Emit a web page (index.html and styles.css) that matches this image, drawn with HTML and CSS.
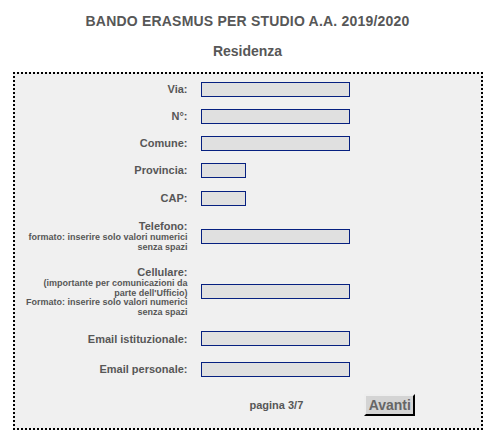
FILE: index.html
```html
<!DOCTYPE html>
<html lang="it">
<head>
<meta charset="utf-8">
<title>Bando Erasmus</title>
<link rel="stylesheet" href="styles.css">
</head>
<body>
<h1 class="title">BANDO ERASMUS PER STUDIO A.A. 2019/2020</h1>
<h2 class="subtitle">Residenza</h2>
<form class="box">
  <div class="grid">
    <label class="lbl">Via:</label>
    <div class="fld"><input class="inp" type="text"></div>

    <label class="lbl">N°:</label>
    <div class="fld"><input class="inp" type="text"></div>

    <label class="lbl">Comune:</label>
    <div class="fld"><input class="inp" type="text"></div>

    <label class="lbl">Provincia:</label>
    <div class="fld"><input class="inp short" type="text"></div>

    <label class="lbl lbl-cap">CAP:</label>
    <div class="fld"><input class="inp short" type="text"></div>

    <label class="lbl">Telefono:<span class="note">formato: inserire solo valori numerici senza spazi</span></label>
    <div class="fld"><input class="inp" type="text"></div>

    <label class="lbl">Cellulare:<span class="note">(importante per comunicazioni da parte dell'Ufficio)</span><span class="note">Formato: inserire solo valori numerici senza spazi</span></label>
    <div class="fld"><input class="inp" type="text"></div>

    <label class="lbl lbl-mail">Email istituzionale:</label>
    <div class="fld"><input class="inp" type="text"></div>

    <label class="lbl lbl-last">Email personale:</label>
    <div class="fld"><input class="inp" type="text"></div>
  </div>
  <div class="footer">
    <span class="page">pagina 3/7</span>
    <button class="btn" type="button">Avanti</button>
  </div>
</form>
</body>
</html>
```

FILE: styles.css
```css
html, body {
  margin: 0;
  padding: 0;
  background: #ffffff;
}
body {
  font-family: "Liberation Sans", Arial, sans-serif;
  color: #575757;
  padding-top: 13px;
}
.title {
  margin: 0;
  font-size: 14px;
  font-weight: bold;
  text-align: center;
  line-height: 16px;
  letter-spacing: 0.2px;
}
.subtitle {
  margin: 14px 0 0;
  font-size: 14px;
  font-weight: bold;
  text-align: center;
  line-height: 16px;
}
.box {
  width: 466px;
  margin: 13px auto 0;
  border: 2px dotted #000;
  background: #f0f0f0;
  padding: 2px 0 0;
  box-sizing: content-box;
}
.grid {
  display: grid;
  grid-template-columns: 173px 1fr;
  column-gap: 13px;
  align-items: center;
}
.lbl {
  font-size: 11px;
  font-weight: bold;
  text-align: right;
  padding: 7px 0;
  line-height: 13px;
}
.lbl-cap {
  padding: 8px 0;
}
.lbl-mail {
  padding: 8px 0 7px;
}
.lbl-last {
  padding: 10px 0 7px;
}
.note {
  display: block;
  font-size: 9px;
  line-height: 9.6px;
  font-weight: bold;
  padding-left: 8px;
}
.fld {
  display: flex;
  align-items: center;
}
.lbl-last + .fld {
  padding-top: 3px;
}
.inp {
  width: 149px;
  height: 15px;
  box-sizing: border-box;
  border: 1px solid #062080;
  background: #e0e0e0;
  margin: 0;
  padding: 0 2px;
  font-size: 11px;
}
.inp.short {
  width: 45px;
}
.footer {
  display: flex;
  align-items: center;
  padding: 11px 0 12px 235px;
}
.page {
  font-size: 11px;
  font-weight: bold;
}
.btn {
  margin-left: 61px;
  width: 51px;
  height: 22px;
  padding: 0;
  background: #d4d4d4;
  color: #666666;
  font-family: "Liberation Sans", Arial, sans-serif;
  font-size: 14px;
  font-weight: bold;
  border: 2px outset #eeeeee;
  border-right-color: #555;
  border-bottom-color: #555;
}
```
